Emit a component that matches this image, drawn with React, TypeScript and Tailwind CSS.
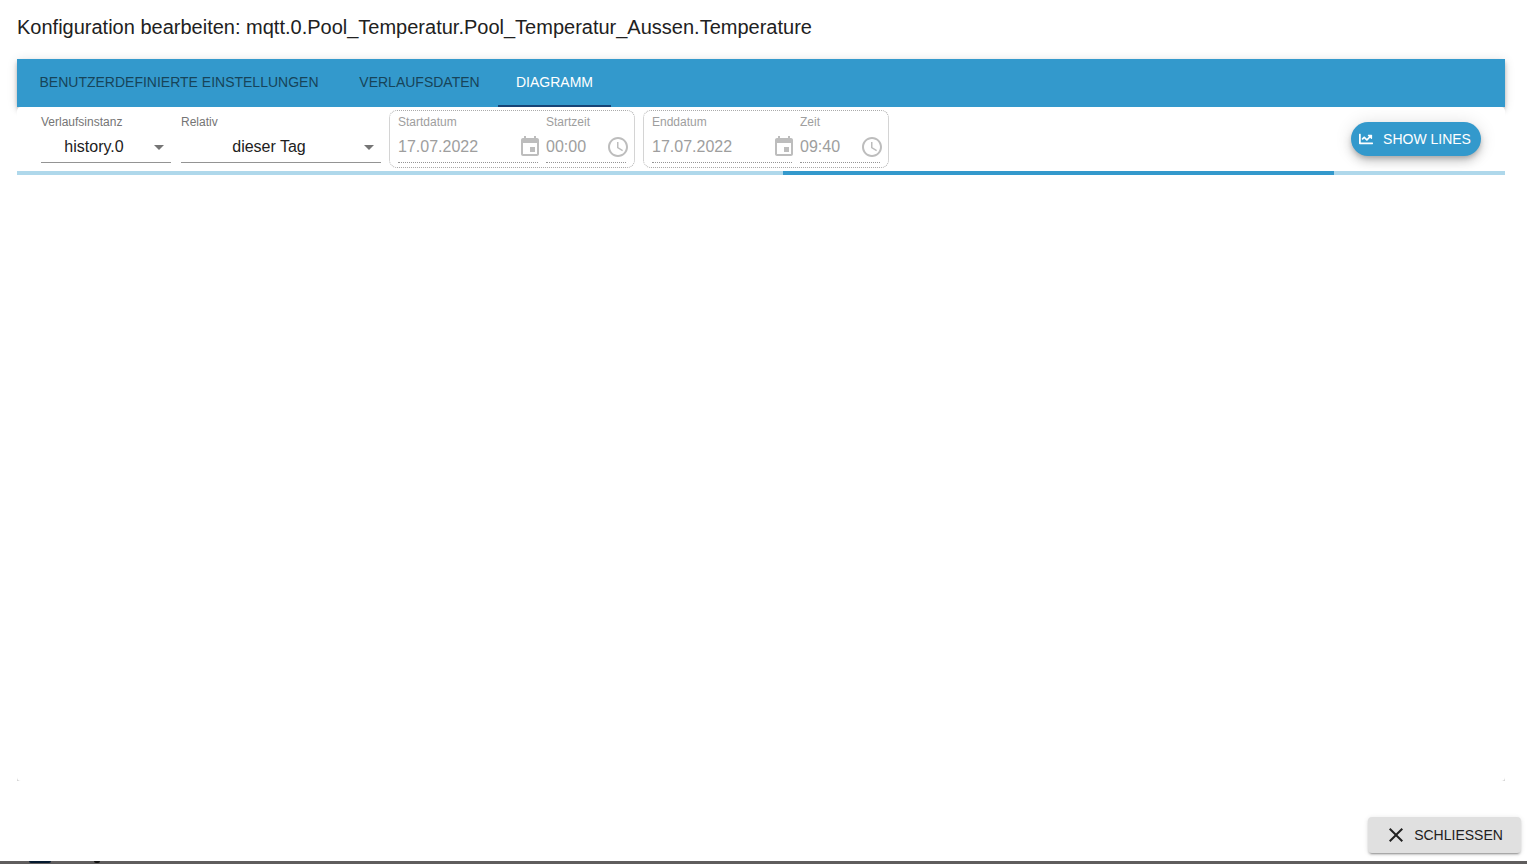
import { useState } from 'react';

type FieldProps = { id: string; label: string; value: string; kind: 'date' | 'time' };

function CalendarIcon() {
  return (
    <svg viewBox="0 0 24 24" className="size-6 shrink-0 fill-[#bdbdbd]" aria-hidden="true">
      <path d="M17 12h-5v5h5v-5zM16 1v2H8V1H6v2H5c-1.11 0-1.99.9-1.99 2L3 19c0 1.1.89 2 2 2h14c1.1 0 2-.9 2-2V5c0-1.1-.9-2-2-2h-1V1h-2zm3 18H5V8h14v11z" />
    </svg>
  );
}

function ClockIcon() {
  return (
    <svg viewBox="0 0 24 24" className="size-6 shrink-0 fill-[#bdbdbd]" aria-hidden="true">
      <path d="M11.99 2C6.47 2 2 6.48 2 12s4.47 10 9.99 10C17.52 22 22 17.52 22 12S17.52 2 11.99 2zM12 20c-4.42 0-8-3.58-8-8s3.58-8 8-8 8 3.58 8 8-3.58 8-8 8z" />
      <path d="M12.5 7H11v6l5.25 3.15.75-1.23-4.5-2.67z" />
    </svg>
  );
}

function SelectField({ id, label, option, className }: { id: string; label: string; option: string; className: string }) {
  return (
    <div className={`flex flex-col gap-px ${className}`}>
      <label htmlFor={id} className="h-4 text-xs leading-4 text-[#757575]">{label}</label>
      <div className="grid h-8 items-center border-b border-[#949494]">
        <select
          id={id}
          className="col-start-1 row-start-1 h-8 w-full appearance-none bg-transparent pr-6 text-center text-base text-[#212121] outline-none [text-align-last:center]"
        >
          <option>{option}</option>
        </select>
        <svg viewBox="0 0 24 24" className="pointer-events-none col-start-1 row-start-1 size-6 justify-self-end fill-[#757575]" aria-hidden="true">
          <path d="M7 10l5 5 5-5z" />
        </svg>
      </div>
    </div>
  );
}

function PickerField({ id, label, value, kind }: FieldProps) {
  return (
    <div className={`flex flex-col gap-px ${kind === 'date' ? 'w-[140px]' : 'w-20'}`}>
      <label htmlFor={id} className="h-4 text-xs leading-4 text-[#9e9e9e]">{label}</label>
      <div className="flex h-8 items-center border-b border-dotted border-[#949494]">
        <input id={id} disabled defaultValue={value} className="w-0 min-w-0 flex-1 bg-transparent text-base text-[#9e9e9e]" />
        <span className="-mr-1 flex">{kind === 'date' ? <CalendarIcon /> : <ClockIcon />}</span>
      </div>
    </div>
  );
}

function PickerGroup({ fields, name }: { fields: FieldProps[]; name: string }) {
  return (
    <div role="group" aria-label={name} className="flex h-[58px] gap-2 rounded-lg border border-dotted border-[#aaaaaa] px-2 pt-[3px]">
      {fields.map((f) => <PickerField key={f.id} {...f} />)}
    </div>
  );
}

const tabs = [
  { label: 'BENUTZERDEFINIERTE EINSTELLUNGEN', width: 'w-[324px]' },
  { label: 'VERLAUFSDATEN', width: 'w-[157px]' },
  { label: 'DIAGRAMM', width: 'w-[113px]' },
];

export default function App() {
  const [active, setActive] = useState(2);
  return (
    <div className="flex h-screen flex-col bg-[#5f5d5d] font-['Liberation_Sans',Arial,sans-serif]">
      <main className="flex min-h-0 flex-1 flex-col bg-white">
        <h1 className="px-[17px] pt-[11px] pb-4 text-xl leading-8 text-[#212121]">
          Konfiguration bearbeiten: mqtt.0.Pool_Temperatur.Pool_Temperatur_Aussen.Temperature
        </h1>
        <div className="mr-[22px] ml-[17px] flex min-h-0 flex-1 flex-col">
          <div role="tablist" className="flex h-12 shrink-0 bg-[#3399cc] shadow-[0_2px_4px_-1px_rgba(0,0,0,0.2),0_4px_5px_rgba(0,0,0,0.14),0_1px_10px_rgba(0,0,0,0.12)]">
            {tabs.map((tab, i) => (
              <button
                key={tab.label}
                role="tab"
                aria-selected={i === active}
                onClick={() => setActive(i)}
                className={`h-12 border-b-2 text-sm whitespace-nowrap ${tab.width} ${i === active ? 'border-[#164477] text-white' : 'border-transparent text-[#174459]'}`}
              >
                {tab.label}
              </button>
            ))}
          </div>
          <div className="z-10 flex min-h-0 flex-1 flex-col bg-[#d6d6d6]">
            <section className="flex min-h-0 flex-1 flex-col rounded bg-white">
              <div className="flex h-16 shrink-0 items-start px-6">
                <SelectField id="instance" label="Verlaufsinstanz" option="history.0" className="mt-[7px] mr-2.5 w-[130px]" />
                <SelectField id="relative" label="Relativ" option="dieser Tag" className="mt-[7px] mr-2 w-[200px]" />
                <div className="mt-[3px] flex gap-2">
                  <PickerGroup
                    name="Start"
                    fields={[
                      { id: 'start-date', label: 'Startdatum', value: '17.07.2022', kind: 'date' },
                      { id: 'start-time', label: 'Startzeit', value: '00:00', kind: 'time' },
                    ]}
                  />
                  <PickerGroup
                    name="Ende"
                    fields={[
                      { id: 'end-date', label: 'Enddatum', value: '17.07.2022', kind: 'date' },
                      { id: 'end-time', label: 'Zeit', value: '09:40', kind: 'time' },
                    ]}
                  />
                </div>
                <button className="mt-[15px] ml-auto flex h-[34px] w-[130px] items-center gap-2 rounded-full bg-[#3399cc] px-2 text-sm text-white shadow-[0_3px_5px_-1px_rgba(0,0,0,0.2),0_6px_10px_rgba(0,0,0,0.14),0_1px_18px_rgba(0,0,0,0.12)]">
                  <svg viewBox="0 0 512 512" className="size-3.5 shrink-0 fill-white" aria-hidden="true">
                    <path d="M496 384H64V80c0-8.84-7.16-16-16-16H16C7.16 64 0 71.16 0 80v336c0 17.67 14.33 32 32 32h464c8.84 0 16-7.16 16-16v-32c0-8.84-7.16-16-16-16zM464 96H345.94c-21.38 0-32.09 25.85-16.97 40.97l32.4 32.4L288 242.75l-73.37-73.37c-12.5-12.5-32.76-12.5-45.25 0l-68.69 68.69c-6.25 6.25-6.25 16.38 0 22.63l22.62 22.62c6.25 6.25 16.38 6.25 22.63 0L192 237.25l73.37 73.37c12.5 12.5 32.76 12.5 45.25 0l96-96 32.4 32.4c15.12 15.12 40.97 4.41 40.97-16.97V112c.01-8.84-7.15-16-15.99-16z" />
                  </svg>
                  <span className="flex-1 text-center whitespace-nowrap">SHOW LINES</span>
                </button>
              </div>
              <div role="progressbar" aria-label="Diagramm" className="flex h-1 shrink-0 bg-[#afd8eb]">
                <div className="ml-[51.5%] w-[37%] bg-[#3399cc]" />
              </div>
            </section>
          </div>
        </div>
        <footer className="flex shrink-0 justify-end pt-9 pr-1.5 pb-2">
          <button className="flex h-9 w-[153px] items-center rounded bg-[#e0e0e0] pl-4 text-sm text-[#212121] shadow-[0_3px_1px_-2px_rgba(0,0,0,0.2),0_2px_2px_rgba(0,0,0,0.14),0_1px_5px_rgba(0,0,0,0.12)]">
            <svg viewBox="0 0 24 24" className="size-6 fill-[#212121]" aria-hidden="true">
              <path d="M19 6.41L17.59 5 12 10.59 6.41 5 5 6.41 10.59 12 5 17.59 6.41 19 12 13.41 17.59 19 19 17.59 13.41 12z" />
            </svg>
            <span className="flex-1 pr-3 text-center">SCHLIESSEN</span>
          </button>
        </footer>
      </main>
      <div className="flex h-[3px] shrink-0 pl-[29px]" aria-hidden="true">
        <span className="h-0.5 w-[22px] rounded-b-sm bg-[#041a30]" />
        <span className="ml-[43px] h-0.5 w-1.5 rounded-b-full bg-[#111111]" />
      </div>
    </div>
  );
}
